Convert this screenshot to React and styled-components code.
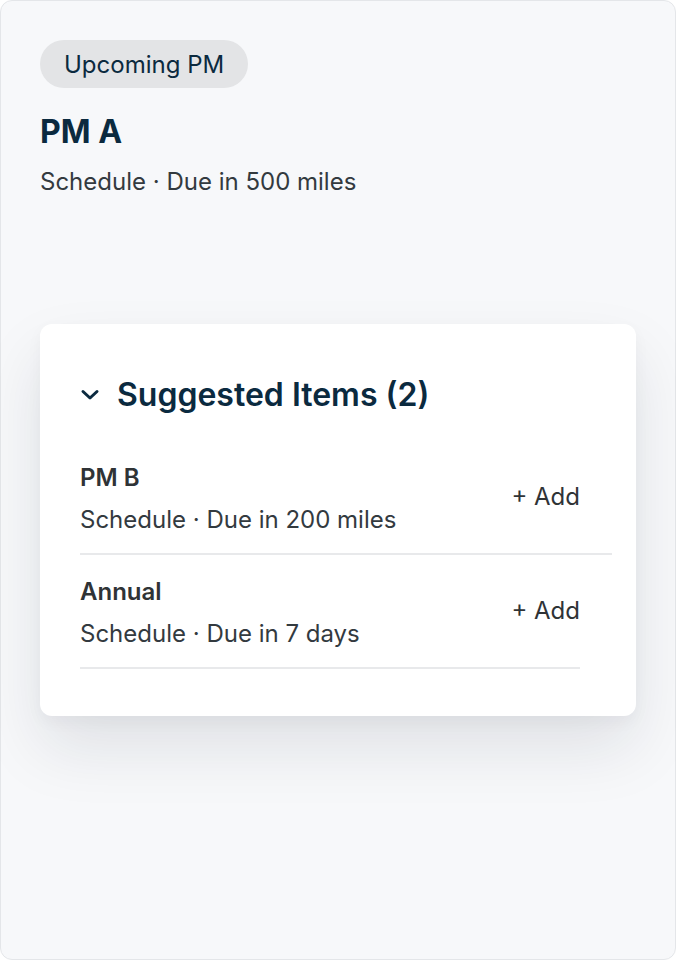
import React from "react"
import styled, { createGlobalStyle } from "styled-components"

const Global = createGlobalStyle`
  html, body { margin: 0; padding: 0; background: #ffffff; }
  body { font-family: Inter, "Noto Sans", sans-serif; }
  * { box-sizing: border-box; }
`

const Frame = styled.div`
  width: 676px;
  height: 960px;
  background: #f7f8fa;
  border: 1px solid #e4e6e9;
  border-radius: 12px;
  padding: 39px;
  display: flex;
  flex-direction: column;
`

const Pill = styled.span`
  align-self: flex-start;
  height: 48px;
  padding: 0 24px;
  border-radius: 24px;
  background: #e3e4e6;
  color: #0b2a3f;
  font-size: 24px;
  display: flex;
  align-items: center;
`

const Title = styled.h1`
  margin: 24px 0 0;
  font-size: 32px;
  font-weight: 700;
  color: #0b2a3f;
  line-height: 40px;
`

const Meta = styled.div`
  margin-top: ${p => p.$gap || 0}px;
  font-size: 24px;
  color: #333a3f;
  line-height: 32px;
`

const Card = styled.div`
  margin-top: 126px;
  background: #ffffff;
  border-radius: 12px;
  padding: 51px 24px 47px 40px;
  box-shadow: 0 32px 64px rgba(20, 30, 45, 0.1), 0 6px 16px rgba(20, 30, 45, 0.04);
`

const Header = styled.div`
  display: flex;
  align-items: center;
  gap: 17px;
  color: #0b2a3f;
  margin-bottom: 27px;
`

const Heading = styled.h2`
  margin: 0;
  font-size: 32px;
  font-weight: 600;
  line-height: 40px;
`

const Row = styled.div`
  display: flex;
  align-items: center;
  justify-content: space-between;
  padding: 20px ${p => p.$inset}px 17px 0;
  border-bottom: 2px solid #e8e9eb;
  margin-right: ${p => p.$shrink}px;
  & + & { padding-top: 21px; }
`

const RowText = styled.div`
  display: flex;
  flex-direction: column;
`

const RowTitle = styled.div`
  font-size: 24px;
  font-weight: 600;
  color: #2f3336;
  line-height: 32px;
`

const AddButton = styled.button`
  border: 0;
  background: none;
  padding: 0 0 5px;
  font-family: inherit;
  font-size: 24px;
  color: #2f3336;
  cursor: pointer;
`

const items = [
  { name: "PM B", due: "Due in 200 miles", inset: 32, shrink: 0 },
  { name: "Annual", due: "Due in 7 days", inset: 0, shrink: 32 },
]

export default function App() {
  return (
    <>
      <Global />
      <Frame>
        <Pill>Upcoming PM</Pill>
        <Title>PM A</Title>
        <Meta $gap={14}>Schedule · Due in 500 miles</Meta>
        <Card>
          <Header>
            <svg width="20" height="14" viewBox="0 0 20 14" fill="none">
              <path d="M3 3.5l7 6.5 7-6.5" stroke="currentColor" strokeWidth="3" strokeLinecap="round" strokeLinejoin="round" />
            </svg>
            <Heading>Suggested Items (2)</Heading>
          </Header>
          {items.map(it => (
            <Row key={it.name} $inset={it.inset} $shrink={it.shrink}>
              <RowText>
                <RowTitle>{it.name}</RowTitle>
                <Meta $gap={10}>Schedule · {it.due}</Meta>
              </RowText>
              <AddButton>+ Add</AddButton>
            </Row>
          ))}
        </Card>
      </Frame>
    </>
  )
}
